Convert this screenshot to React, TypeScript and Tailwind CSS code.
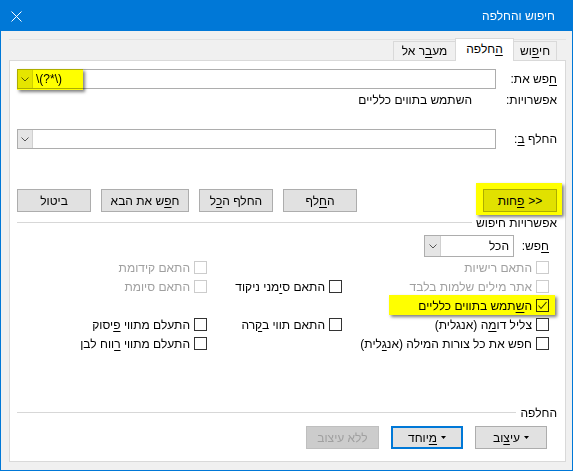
import React from "react";

const U = ({ children }: { children: React.ReactNode }) => (
  <span className="underline underline-offset-[2px] decoration-1">{children}</span>
);

function Chevron() {
  return (
    <svg width="8" height="5" viewBox="0 0 8 5">
      <path d="M0.5 0.5 L4 4 L7.5 0.5" fill="none" stroke="#555555" strokeWidth="1" />
    </svg>
  );
}

function Box({ checked, disabled }: { checked?: boolean; disabled?: boolean }) {
  return (
    <span
      className={
        disabled
          ? "w-[13px] h-[13px] shrink-0 border border-[#cccccc] bg-white flex items-center justify-center"
          : "w-[13px] h-[13px] shrink-0 border border-[#333333] bg-white flex items-center justify-center"
      }
    >
      {checked && (
        <svg width="11" height="11" viewBox="0 0 11 11">
          <path d="M1.5 5.5 L4 8.5 L9.5 2" fill="none" stroke="#333333" strokeWidth="1.1" />
        </svg>
      )}
    </span>
  );
}

function Check({
  children,
  disabled,
  checked,
  highlight,
}: {
  children: React.ReactNode;
  disabled?: boolean;
  checked?: boolean;
  highlight?: boolean;
}) {
  return (
    <div className="relative flex items-center gap-[4px] whitespace-nowrap">
      <Box checked={checked} disabled={disabled} />
      <span className={disabled ? "text-[#a0a0a0]" : "text-black"}>{children}</span>
      {highlight && (
        <div className="absolute left-[47px] -right-[6px] -top-[1px] bottom-0 bg-[#ffff00] mix-blend-multiply shadow-[2px_2px_3px_rgba(0,0,0,0.5)]" />
      )}
    </div>
  );
}

function Btn({ children, className }: { children: React.ReactNode; className: string }) {
  return (
    <div
      className={
        "h-[23px] border border-[#adadad] bg-[#e1e1e1] flex items-center justify-center whitespace-nowrap " +
        className
      }
    >
      {children}
    </div>
  );
}

function Tri() {
  return (
    <svg width="5" height="3" viewBox="0 0 5 3">
      <path d="M0 0 L5 0 L2.5 3 Z" fill="#000000" />
    </svg>
  );
}

function Combo({ children }: { children?: React.ReactNode }) {
  return (
    <div className="w-full h-[20px] border border-[#adadad] bg-white flex items-stretch">
      <div className="flex-1">{children}</div>
      <div className="w-[15px] bg-[#e5e5e5] border-r border-[#d0d0d0] flex items-center justify-center">
        <Chevron />
      </div>
    </div>
  );
}

export default function App() {
  return (
    <div
      dir="rtl"
      className="w-[573px] h-[471px] bg-[#f0f0f0] border border-[#0078d7] flex flex-col text-[12px] leading-[16px] text-black overflow-hidden font-['Liberation_Sans','DejaVu_Sans',sans-serif]"
    >
      {/* Title bar */}
      <div className="h-[30px] shrink-0 bg-[#0078d7] text-white flex items-center justify-between pr-[17px] pl-[10px]">
        <span>חיפוש והחלפה</span>
        <svg width="11" height="11" viewBox="0 0 11 11">
          <path d="M0.5 0.5 L10.5 10.5 M10.5 0.5 L0.5 10.5" stroke="#ffffff" strokeWidth="1" />
        </svg>
      </div>

      {/* Tabs */}
      <div className="mt-[8px] ml-[8px] mr-[6px] h-[21px] shrink-0 border-t border-[#e3e3e3] flex items-end pr-[9px]">
        <div className="h-[19px] w-[44px] border-t border-x border-[#d9d9d9] flex items-center justify-center">
          חי<U>פ</U>וש
        </div>
        <div className="relative z-10 h-[23px] w-[59px] -mr-px -mb-px border-t border-x border-[#d9d9d9] bg-white flex items-center justify-center pb-[2px]">
          <U>ה</U>חלפה
        </div>
        <div className="h-[19px] w-[63px] -mr-px border-t border-x border-[#d9d9d9] flex items-center justify-center">
          מע<U>ב</U>ר אל
        </div>
      </div>

      {/* Panel */}
      <div className="ml-[8px] mr-[6px] h-[402px] shrink-0 border border-[#d9d9d9] bg-white flex flex-col pl-[7px] pr-[8px]">
        {/* Find */}
        <div className="mt-[8px] h-[20px] flex">
          <div className="w-[61px] flex items-center">
            <span>
              <U>ח</U>פש את:
            </span>
          </div>
          <div className="relative flex-1 flex">
            <Combo>
              <div dir="ltr" className="text-left pl-[3px] leading-[18px]">
                {"\\(?*\\)"}
              </div>
            </Combo>
            <div className="absolute left-0 top-0 w-[66px] h-[21px] bg-[#ffff00] mix-blend-multiply shadow-[2px_2px_3px_rgba(0,0,0,0.5)]" />
          </div>
        </div>

        {/* Options */}
        <div className="mt-[3px] h-[16px] flex items-center">
          <div className="w-[85px]">אפשרויות:</div>
          <div>השתמש בתווים כלליים</div>
        </div>

        {/* Replace */}
        <div className="mt-[21px] h-[20px] flex">
          <div className="w-[61px] flex items-center">
            <span>
              החלף <U>ב</U>:
            </span>
          </div>
          <div className="flex-1 flex">
            <Combo />
          </div>
        </div>

        {/* Buttons */}
        <div className="mt-[40px] h-[23px] flex justify-between">
          <div className="relative w-[74px]">
            <Btn className="w-[74px]">
              <span dir="ltr" className="flex items-center gap-[4px]">
                <span dir="rtl">
                  <U>פ</U>חות
                </span>
                <span>&gt;&gt;</span>
              </span>
            </Btn>
            <div className="absolute -left-[7px] -right-[5px] -top-[6px] -bottom-[3px] bg-[#ffff00] mix-blend-multiply shadow-[2px_2px_3px_rgba(0,0,0,0.5)]" />
          </div>
          <div className="flex gap-[10px]">
            <Btn className="w-[74px]">
              <span>
                ה<U>ח</U>לף
              </span>
            </Btn>
            <Btn className="w-[74px]">
              <span>
                החלף ה<U>כ</U>ל
              </span>
            </Btn>
            <Btn className="w-[88px]">
              <span>
                ח<U>פ</U>ש את הבא
              </span>
            </Btn>
            <Btn className="w-[74px]">
              <span>ביטול</span>
            </Btn>
          </div>
        </div>

        {/* Search options separator */}
        <div className="mt-[3px] h-[15px] flex items-center gap-[4px]">
          <span className="whitespace-nowrap">אפשרויות חיפוש</span>
          <div className="flex-1 h-px bg-[#d7d7d7]" />
        </div>

        <div className="pr-[8px] flex flex-col">
          {/* Search combo */}
          <div className="mt-[5px] h-[22px] flex items-center">
            <div className="w-[35px]">
              <U>ח</U>פש:
            </div>
            <div className="w-[90px] h-[22px] border border-[#adadad] bg-white flex items-stretch">
              <div className="flex-1 flex items-center pr-[4px]">הכל</div>
              <div className="w-[16px] bg-[#e5e5e5] border-r border-[#d0d0d0] flex items-center justify-center">
                <Chevron />
              </div>
            </div>
          </div>

          {/* Checkboxes */}
          <div className="mt-[1px] grid grid-cols-[207px_135px_1fr] auto-rows-[19px]">
            <Check disabled>התאם רישיות</Check>
            <div />
            <Check disabled>התאם קידומת</Check>

            <Check disabled>אתר מילים שלמות בלבד</Check>
            <Check>
              התאם ס<U>י</U>מני ניקוד
            </Check>
            <Check disabled>התאם סיומת</Check>

            <Check checked highlight>
              ה<U>ש</U>תמש בתווים כלליים
            </Check>
            <div />
            <div />

            <Check>
              צליל דו<U>מ</U>ה (אנגלית)
            </Check>
            <Check>
              התאם תווי ב<U>ק</U>רה
            </Check>
            <Check>
              התעלם מתווי <U>פ</U>יסוק
            </Check>

            <Check>
              חפש את כל צורות המילה (אנ<U>ג</U>לית)
            </Check>
            <div />
            <Check>
              התעלם מתווי <U>ר</U>ווח לבן
            </Check>
          </div>
        </div>

        {/* Replace separator */}
        <div className="mt-[52px] h-[15px] flex items-center gap-[4px]">
          <span className="whitespace-nowrap">החלפה</span>
          <div className="flex-1 h-px bg-[#d7d7d7]" />
        </div>

        {/* Bottom buttons */}
        <div className="mt-[6px] h-[23px] flex gap-[12px] pr-[10px]">
          <Btn className="w-[72px] gap-[4px]">
            <Tri />
            <span>
              עי<U>צ</U>וב
            </span>
          </Btn>
          <div className="w-[72px] h-[23px] border-2 border-[#0078d7] bg-[#e1e1e1] flex items-center justify-center gap-[4px]">
            <Tri />
            <span>
              <U>מ</U>יוחד
            </span>
          </div>
          <div className="w-[73px] h-[23px] border border-[#bfbfbf] bg-[#cccccc] text-[#a0a0a0] flex items-center justify-center">
            ללא עיצוב
          </div>
        </div>
      </div>
    </div>
  );
}
